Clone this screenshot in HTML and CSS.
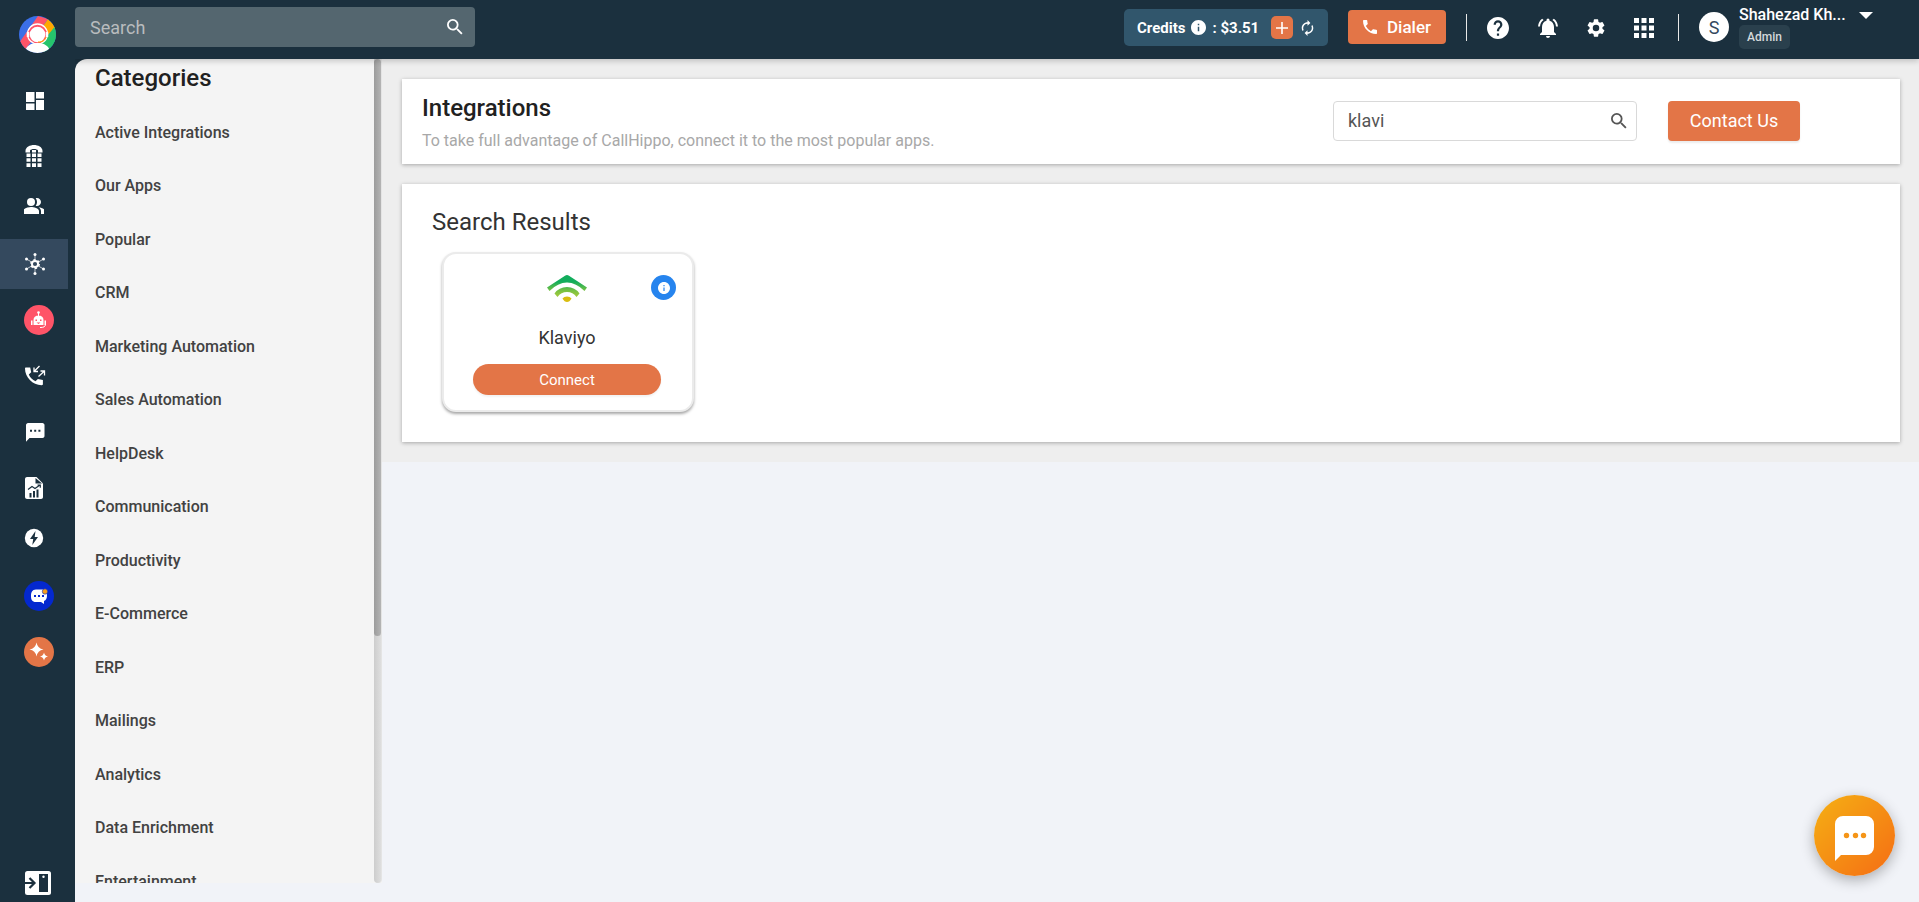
FILE: index.html
```html
<!DOCTYPE html>
<html lang="en">
<head>
<meta charset="utf-8">
<title>Integrations</title>
<link rel="stylesheet" href="styles.css">
</head>
<body>
<div class="app">
  <nav class="rail" aria-label="Main">
    <a class="logo" href="#" aria-label="Home">
      <svg viewBox="0 0 37 37" width="37" height="37">
        <defs><clipPath id="logo-clip"><circle cx="18.5" cy="18.5" r="18.5"/></clipPath></defs>
        <g clip-path="url(#logo-clip)">
          <rect width="37" height="37" fill="#3b6fe8"/>
          <path d="M19 0 29 3 6 34 0 27z" fill="#ff5468"/>
          <path d="M29 3 37 11 23 25 16 22z" fill="#ffa800"/>
          <path d="M37 9v28H25l-3-9z" fill="#26c46c"/>
          <circle cx="18.500" cy="18" r="10" fill="#ff5468" stroke="#fff" stroke-width="1.300"/>
          <path d="M9 16v5M28 16v5" stroke="#fff" stroke-width="2.500"/>
          <path d="M6 37c0-7 6-10 12.500-10S31 30 31 37z" fill="#fff"/>
          <circle cx="18.500" cy="18.500" r="7.800" fill="#fff"/>
          <path d="M27 21c-1 4-4 5-8 5" fill="none" stroke="#ffa800"/>
        </g>
      </svg>
    </a>
    <ul class="rail-list">
      <li><a href="#" aria-label="Dashboard"><svg viewBox="0 0 22 22" width="22" height="22"><path d="M2 2h8.500v10H2zM12 2h8v6.500h-8zM2 13.500h8.500V20H2zM12 10h8v10h-8z"/></svg></a></li>
      <li><a href="#" aria-label="Numbers"><svg viewBox="0 0 22 24" width="22" height="24"><path d="M1.500 7C1.500 3 6 1 10 1s8.500 2 8.500 6v1.500H14V6.500C13 4.500 7 4.500 6 6.500v2H1.500zM2.500 9.500h4v3.500h-4zM8 9.500h4v3.500H8zM13.500 9.500h4v3.500h-4zM2.500 14.300h4v3.500h-4zM8 14.300h4v3.500H8zM13.500 14.300h4v3.500h-4zM2.500 19.200h4v3.800h-4zM8 19.200h4v3.800H8zM13.500 19.200h4v3.800h-4zM8 6h4v2.500H8z"/></svg></a></li>
      <li class="snug"><a href="#" aria-label="Users"><svg viewBox="2 2 20 20" width="20" height="20"><path d="M16.670 13.130C18.040 14.060 19 15.320 19 17v3h4v-3c0-2.180-3.570-3.470-6.330-3.870z"/><circle cx="9" cy="8" r="4"/><path d="M15 12c2.210 0 4-1.790 4-4s-1.790-4-4-4c-.47 0-.91.100-1.330.240C14.500 5.270 15 6.580 15 8s-.5 2.730-1.330 3.760c.42.140.86.240 1.330.240zM9 13c-2.670 0-8 1.340-8 4v3h16v-3c0-2.660-5.330-4-8-4z"/></svg></a></li>
      <li class="current"><a href="#" aria-label="Integrations" aria-current="page"><svg viewBox="0 0 22 22" width="22" height="22"><path d="M11 1v20M2.500 6l17 10M19.500 6l-17 10" stroke="#fff" stroke-width=".7"/><circle cx="11" cy="11" r="4" /><circle cx="11" cy="11" r="4.200" fill="none" stroke="#fff" stroke-width="1.500" stroke-dasharray="2.200 2.200"/><circle cx="11" cy="11" r="2.100" fill="#34495e"/><circle cx="11" cy="1.500" r="1.500"/><circle cx="11" cy="20.500" r="1.500"/><circle cx="2.500" cy="6" r="1.500"/><circle cx="19.500" cy="6" r="1.500"/><circle cx="2.500" cy="16" r="1.500"/><circle cx="19.500" cy="16" r="1.500"/></svg></a></li>
      <li><a href="#" aria-label="Voice bot"><svg viewBox="0 0 30 30" width="30" height="30"><circle cx="15" cy="15" r="15" fill="#ff5468"/><circle cx="14.500" cy="7.500" r="1.300"/><path d="M14 8h1v4h-1zM9.500 15c0-3 2-4.500 5-4.500s5 1.500 5 4.500v5h-10zM7 15.500h1.500V20H7zM20.500 15.500H22V20h-1.500z"/><path d="M21.500 19c0 3-2 3.500-5.500 3.500" fill="none" stroke="#fff"/><path d="M11.500 14.500h1.500V16h-1.500zM16 14.500h1.500V16H16zM12.500 17.500h4l-2 1.500z" fill="#ff5468"/></svg></a></li>
      <li><a href="#" aria-label="Calls"><svg viewBox="0 0 22 22" width="22" height="22"><path d="M2 2.500h4.200l1 4.800L4.800 9.500c1.300 3 3.700 5.400 6.700 6.700l2.400-2.300 5 1V19c0 .8-.5 1.200-1.200 1.200C8.500 20.200 1 12 1 3.500c0-.6.400-1 1-1z"/><path d="M15.500 1 10 6.500M10 2.500v4h4M14.500 11.500 20.500 6M16.500 6h4v4.500" fill="none" stroke="#fff" stroke-width="1.300"/></svg></a></li>
      <li><a href="#" aria-label="Messages"><svg viewBox="0 0 22 22" width="22" height="22"><path d="M4 2h14.500c1 0 2 1 2 2v11c0 1-1 2-2 2H5.500L2 20.800V4c0-1 1-2 2-2z"/><path d="M6 8.700h2v2H6zM10.200 8.700h2v2h-2zM14.400 8.700h2v2h-2z" fill="#1b303e"/></svg></a></li>
      <li><a href="#" aria-label="Reports"><svg viewBox="0 0 22 24" width="22" height="24"><path d="M3 1h9.500L19 7.500V21c0 1-.8 2-2 2H3c-1 0-2-1-2-2V3c0-1.200 1-2 2-2z"/><path d="M11.500 2v5.500H18M5.500 17h2v4.500h-2zM9 15h2v6.500H9zM12.500 13.500h2v8h-2z" fill="#1b303e"/><path d="m4 13.500 4-3 3 2 5-3.500M13.500 9h2.800v2.800" fill="none" stroke="#1b303e" stroke-width="1.200"/></svg></a></li>
      <li class="snug"><a href="#" aria-label="Power dialer"><svg viewBox="0 0 20 20" width="20" height="20"><circle cx="10" cy="10" r="9.200"/><path d="M11.500 3 6 11h3.200L8.300 17 14 9h-3.300z" fill="#1b303e"/></svg></a></li>
      <li><a href="#" aria-label="Chat"><svg viewBox="0 0 30 30" width="30" height="30"><circle cx="15" cy="15" r="15" fill="#0428cf"/><path d="M12 8.500h6c4 0 5 2.500 5 6 0 3-1 4.500-3 5.500v3l-3-2h-5c-4 0-5-2.500-5-6s1-6.500 5-6.500z"/><path d="M10 14h2v2h-2zM14 14h2v2h-2zM18 14h2v2h-2z" fill="#0428cf"/><circle cx="21" cy="10.500" r="2.700" fill="#f9a01b" stroke="#0428cf" stroke-width=".6"/></svg></a></li>
      <li><a href="#" aria-label="AI tools"><svg viewBox="0 0 30 30" width="30" height="30"><circle cx="15" cy="15" r="15" fill="#e37547"/><path d="M12.500 5.500q1 6 7 7-6 1-7 7-1-6-7-7 6-1 7-7zM20 15.500q.7 3.500 4 4-3.300.7-4 4-.7-3.300-4-4 3.300-.5 4-4z"/></svg></a></li>
    </ul>
    <button class="expand" type="button" aria-label="Expand menu"><svg viewBox="0 0 26 24" width="26" height="24"><rect x="0" y="0" width="26" height="24" rx="2.500"/><rect x="14" y="3" width="9" height="18" fill="#1b303e"/><circle cx="18.500" cy="5.700" r="1.200"/><path d="M0 12h9M4.500 7l5 5-5 5" fill="none" stroke="#1b303e" stroke-width="2.200"/></svg></button>
  </nav>

  <header class="topbar">
    <form class="global-search" role="search">
      <input type="search" placeholder="Search" aria-label="Search">
      <button type="button" aria-label="Run search"><svg viewBox="3 3 18 18" width="16" height="16"><path d="M15.500 14h-.79l-.28-.27A6.470 6.470 0 0 0 16 9.500 6.500 6.500 0 1 0 9.500 16c1.610 0 3.090-.59 4.230-1.570l.27.280v.79l5 4.990L20.490 19l-4.990-5zm-6 0C7.010 14 5 11.990 5 9.500S7.010 5 9.500 5 14 7.010 14 9.500 11.990 14 9.500 14z"/></svg></button>
    </form>
    <div class="credits">
      <span>Credits</span>
      <svg viewBox="2 2 20 20" width="15" height="15"><path d="M12 2C6.480 2 2 6.480 2 12s4.480 10 10 10 10-4.480 10-10S17.520 2 12 2zm1 15h-2v-6h2v6zm0-8h-2V7h2v2z"/></svg>
      <span>: $3.51</span>
      <button class="add" type="button" aria-label="Add credits"><svg viewBox="0 0 12 12" width="12" height="12"><path d="M5.200 0h1.600v5.200H12v1.600H6.800V12H5.200V6.800H0V5.200h5.200z"/></svg></button>
      <button class="refresh" type="button" aria-label="Refresh credits"><svg viewBox="3 1 18 22" width="13" height="16"><path d="M12 6v3l4-4-4-4v3c-4.420 0-8 3.580-8 8 0 1.570.46 3.030 1.240 4.260L6.700 14.800A5.870 5.870 0 0 1 6 12c0-3.310 2.690-6 6-6zm6.760 1.740L17.300 9.200c.44.840.7 1.790.7 2.800 0 3.310-2.690 6-6 6v-3l-4 4 4 4v-3c4.420 0 8-3.580 8-8 0-1.570-.46-3.030-1.240-4.260z"/></svg></button>
    </div>
    <button class="dialer" type="button"><svg viewBox="3 3 18 18" width="14" height="14"><path d="M6.620 10.790a15.150 15.150 0 0 0 6.590 6.590l2.200-2.200c.27-.27.670-.36 1.020-.24 1.120.37 2.330.57 3.570.57.550 0 1 .45 1 1V20c0 .55-.45 1-1 1C10.610 21 3 13.390 3 4c0-.55.450-1 1-1h3.500c.55 0 1 .45 1 1 0 1.250.2 2.450.57 3.570.110.350.030.740-.25 1.020z"/></svg>Dialer</button>
    <div class="tools">
      <button type="button" aria-label="Help"><svg viewBox="2 2 20 20" width="22" height="22"><path d="M12 2C6.480 2 2 6.480 2 12s4.480 10 10 10 10-4.480 10-10S17.520 2 12 2zm1 17h-2v-2h2v2zm2.070-7.750-.9.920C13.450 12.900 13 13.500 13 15h-2v-.5c0-1.100.45-2.100 1.170-2.830l1.240-1.260c.37-.36.590-.86.590-1.410a2 2 0 1 0-4 0H8a4 4 0 1 1 8 0c0 .88-.36 1.680-.93 2.250z"/></svg></button>
      <button type="button" aria-label="Notifications"><svg viewBox="2 2 20 20" width="20" height="20"><path d="M7.580 4.080 6.150 2.650A10.420 10.420 0 0 0 2.030 10.500h2a8.450 8.450 0 0 1 3.550-6.420zm12.390 6.420h2a10.490 10.490 0 0 0-4.120-7.850l-1.420 1.430a8.500 8.500 0 0 1 3.540 6.420zM18 11c0-3.070-1.640-5.640-4.500-6.320V4a1.500 1.500 0 0 0-3 0v.68C7.630 5.360 6 7.920 6 11v5l-2 2v1h16v-1l-2-2v-5zm-6 11c1.100 0 2-.9 2-2h-4a2 2 0 0 0 2 2z"/></svg></button>
      <button type="button" aria-label="Settings"><svg viewBox="2 2 20 20" width="18" height="18"><path d="M19.140 12.940c.04-.3.060-.61.060-.94s-.02-.64-.07-.94l2.030-1.580a.49.490 0 0 0 .12-.61l-1.920-3.320a.49.490 0 0 0-.59-.22l-2.390.96a7 7 0 0 0-1.620-.94l-.36-2.540A.480.480 0 0 0 13.920 2.400h-3.840a.47.470 0 0 0-.47.410l-.36 2.540c-.59.240-1.130.57-1.620.94l-2.390-.96a.47.470 0 0 0-.59.220L2.740 8.870a.47.470 0 0 0 .12.610l2.030 1.580c-.05.300-.09.630-.09.940s.02.640.07.940l-2.030 1.580a.49.490 0 0 0-.12.610l1.920 3.320c.12.220.37.290.59.220l2.390-.96c.5.380 1.030.7 1.620.94l.36 2.540c.05.240.24.410.48.410h3.840c.24 0 .44-.17.47-.41l.36-2.540a7 7 0 0 0 1.620-.94l2.390.96c.22.080.47 0 .59-.22l1.920-3.320a.47.470 0 0 0-.12-.61zM12 15.600a3.600 3.600 0 1 1 0-7.200 3.600 3.600 0 0 1 0 7.200z"/></svg></button>
      <button type="button" aria-label="Apps"><svg viewBox="0 0 20 20" width="20" height="20"><path d="M0 0h5v5H0zM7.500 0h5v5h-5zM15 0h5v5h-5zM0 7.500h5v5H0zM7.500 7.500h5v5h-5zM15 7.500h5v5h-5zM0 15h5v5H0zM7.500 15h5v5h-5zM15 15h5v5h-5z"/></svg></button>
    </div>
    <button class="account" type="button">
      <span class="avatar">S</span>
      <span class="who"><span class="name">Shahezad Kh...</span><span class="role">Admin</span></span>
      <svg viewBox="0 0 14 7" width="14" height="7"><path d="M0 0h14L7 7z"/></svg>
    </button>
  </header>

  <aside class="categories">
    <div class="cat-body">
      <h2>Categories</h2>
      <ul>
        <li><a href="#">Active Integrations</a></li>
        <li><a href="#">Our Apps</a></li>
        <li><a href="#">Popular</a></li>
        <li><a href="#">CRM</a></li>
        <li><a href="#">Marketing Automation</a></li>
        <li><a href="#">Sales Automation</a></li>
        <li><a href="#">HelpDesk</a></li>
        <li><a href="#">Communication</a></li>
        <li><a href="#">Productivity</a></li>
        <li><a href="#">E-Commerce</a></li>
        <li><a href="#">ERP</a></li>
        <li><a href="#">Mailings</a></li>
        <li><a href="#">Analytics</a></li>
        <li><a href="#">Data Enrichment</a></li>
        <li><a href="#">Entertainment</a></li>
      </ul>
    </div>
    <div class="track"><div class="thumb"></div></div>
  </aside>

  <main class="main">
    <div class="content">
      <section class="panel intro">
        <div class="intro-text">
          <h1>Integrations</h1>
          <p>To take full advantage of CallHippo, connect it to the most popular apps.</p>
        </div>
        <form class="app-search">
          <input type="text" value="klavi" aria-label="Search integrations">
          <button type="button" aria-label="Find integration"><svg viewBox="3 3 18 18" width="16" height="16"><path d="M15.500 14h-.79l-.28-.27A6.470 6.470 0 0 0 16 9.500 6.500 6.500 0 1 0 9.500 16c1.610 0 3.090-.59 4.230-1.570l.27.280v.79l5 4.990L20.490 19l-4.990-5zm-6 0C7.010 14 5 11.990 5 9.500S7.010 5 9.500 5 14 7.010 14 9.500 11.990 14 9.500 14z"/></svg></button>
        </form>
        <button class="contact" type="button">Contact Us</button>
      </section>
      <section class="panel results">
        <h2>Search Results</h2>
        <article class="app-card">
          <svg class="app-logo" viewBox="0 0 40 27" width="40" height="27">
            <defs><linearGradient id="leaf" x1="0" y1="0" x2="0" y2="27" gradientUnits="userSpaceOnUse"><stop offset="0" stop-color="#12ad5c"/><stop offset=".25" stop-color="#12ad5c"/><stop offset=".6" stop-color="#7dc242"/><stop offset=".8" stop-color="#a5c93c"/><stop offset="1" stop-color="#dfbb00"/></linearGradient></defs>
            <g fill="url(#leaf)"><path d="M20 0q1 0 2 .7L40 12.500 37.500 16Q29 7.500 20 7.500T2.500 16L0 12.500 18 .7Q19 0 20 0z"/><path d="M20 12q8 0 12.500 6.500L29.500 22Q26 17 20 17t-9.500 5l-3-3.500Q12 12 20 12z"/><path d="M20 21.500q3 0 4.500 2-2 3.500-4.500 3.500t-4.500-3.500q1.500-2 4.500-2z" fill="#d9bd10"/></g>
          </svg>
          <h3>Klaviyo</h3>
          <button class="connect" type="button">Connect</button>
          <button class="info" type="button" aria-label="About Klaviyo"><svg viewBox="2 2 20 20" width="12" height="12"><path d="M12 2C6.480 2 2 6.480 2 12s4.480 10 10 10 10-4.480 10-10S17.520 2 12 2zm1 15h-2v-6h2v6zm0-8h-2V7h2v2z"/></svg></button>
        </article>
      </section>
    </div>
  </main>
</div>
<button class="chat" type="button" aria-label="Open chat"><svg viewBox="0 0 40 46" width="40" height="46"><path d="M8 0h23a8 8 0 0 1 8 8v23a8 8 0 0 1-8 8H6l-6 6V8a8 8 0 0 1 8-8z"/><g fill="#f59518"><circle cx="11.500" cy="19.500" r="2.700"/><circle cx="20.500" cy="19.500" r="2.700"/><circle cx="28.500" cy="19.500" r="2.700"/></g></svg></button>
</body>
</html>
```

FILE: styles.css
```css
* { box-sizing: border-box; }
body { margin: 0; background: #f1f3f8; color: #212121; font-family: Roboto, "Liberation Sans", sans-serif; font-size: 16px; }
h1, h2, h3, p, ul { margin: 0; padding: 0; }
ul { list-style: none; }
a { color: inherit; text-decoration: none; }
button { border: 0; padding: 0; background: none; color: inherit; font: inherit; cursor: pointer; display: flex; align-items: center; justify-content: center; }
input { font: inherit; border: 0; background: none; outline: 0; min-width: 0; }
svg { display: block; flex: none; }

.app { display: grid; grid-template: 59px 1fr / 75px 307px 1fr; height: 100vh; background: linear-gradient(#1b303e, #1b303e) 0 0 / 100% 80px no-repeat; }

.rail { grid-row: 1 / 3; background: #1b303e; fill: #fff; display: flex; flex-direction: column; }
.logo { padding: 16px 19px 0; }
.rail-list { flex: 1; padding-top: 23px; }
.rail-list li { width: 68px; height: 50px; margin-bottom: 6px; display: flex; align-items: center; }
.rail-list a { padding-left: 24px; }
.rail-list li:has(+ .snug) { margin-bottom: 0; }
.rail-list li:first-child { margin-bottom: 5px; }
.rail-list .snug { margin-bottom: 8px; }
.rail-list .current { background: #34495e; }
.expand { width: 26px; margin: 0 0 7px 25px; }

.topbar { grid-column: 2 / 4; background: #1b303e; color: #fff; fill: #fff; display: flex; align-items: flex-start; padding: 7px 46px 0 0; box-shadow: 0 2px 6px rgba(0, 0, 0, .2); clip-path: inset(0 0 -8px 0); z-index: 1; }
.global-search { width: 400px; height: 40px; display: flex; align-items: center; padding: 0 12px 0 15px; border-radius: 4px; background: #54666f; margin-right: auto; }
.global-search input { flex: 1; font-size: 18px; color: #fff; padding: 0; }
.global-search input::placeholder { color: #b9bcbe; }
.credits { width: 204px; height: 37px; margin: 2px 20px 0 0; padding-left: 13px; display: flex; align-items: center; gap: 6px; border-radius: 5px; background: #31566c; font-size: 15px; font-weight: 700; }
.add { width: 22px; height: 23px; margin-left: 6px; border-radius: 5px; background: #e37547; }
.refresh { margin-left: 2px; }
.dialer { width: 98px; height: 34px; margin: 3px 20px 0 0; gap: 10px; border-radius: 4px; background: #e37547; font-size: 17px; font-weight: 500; }
.tools { width: 213px; height: 27px; margin-top: 7px; padding: 0 24px 0 20px; display: flex; align-items: center; justify-content: space-between; border: solid #e8e8e8; border-width: 0 1px; }
.account { margin: -2px 0 0 20px; align-items: flex-start; text-align: left; fill: #fff; }
.avatar { width: 30px; height: 30px; margin-top: 7px; border-radius: 50%; background: #fff; color: #34495e; font-size: 18px; display: grid; place-items: center; }
.who { width: 120px; margin-left: 10px; display: grid; justify-items: start; line-height: 20px; }
.name { font-weight: 500; }
.role { height: 24px; padding: 2px 8px; border-radius: 5px; background: #2a404d; color: #d5d9db; font-size: 12px; font-weight: 500; }
.account > svg { margin: 7px 0 0; }

.categories { display: flex; align-self: start; height: calc(100vh - 78px); border-radius: 12px 0 0 0; background: #f4f4f4; overflow: hidden; }
.cat-body { flex: 1; padding: 3px 20px 0; overflow: hidden; }
.categories h2 { font-size: 24px; font-weight: 500; line-height: 32px; margin-bottom: 11px; }
.categories li { height: 54px; display: flex; align-items: center; color: #424242; font-weight: 500; }
.categories li:nth-child(even) { height: 53px; }
.track { width: 8px; border-right: 1px solid #e4e4e4; border-radius: 0 0 4px 4px; background: linear-gradient(90deg, #cdcdcd, #dedede); }
.thumb { width: 7px; height: 70%; border-radius: 4px; background: linear-gradient(90deg, #9c9c9c, #b4b4b4); }

.main { background: #f1f3f8; min-width: 0; }
.content { background: #eee; padding: 20px 19px 20px 20px; display: grid; gap: 20px; }
.panel { background: #fff; box-shadow: 0 1px 4px rgba(0, 0, 0, .3); }
.intro { display: flex; align-items: center; padding: 11px 100px 13px 20px; }
.intro-text { flex: 1; }
h1 { font-size: 24px; font-weight: 500; line-height: 36px; }
.intro p { color: #a8a8a8; line-height: 20px; margin-top: 5px; }
.app-search { width: 304px; height: 40px; margin-right: 31px; padding: 0 9px 0 14px; display: flex; align-items: center; border: 1px solid #d9d9d9; border-radius: 4px; fill: #555; }
.app-search input { flex: 1; padding: 0; color: #555; font-size: 18px; }
.contact { width: 132px; height: 40px; border-radius: 4px; background: #e37547; color: #fff; font-size: 18px; box-shadow: 0 2px 2px rgba(0, 0, 0, .08); }
.results { padding: 22px 30px 30px; }
.results h2 { color: #333; font-size: 24px; font-weight: 400; line-height: 32px; margin-bottom: 14px; }
.app-card { position: relative; width: 252px; height: 160px; margin-left: 10px; padding: 21px 2px 0 0; display: flex; flex-direction: column; align-items: center; border: 2px solid #ebebeb; border-radius: 14px; background: #fff; box-shadow: 0 2px 3px rgba(0, 0, 0, .35); }
.app-card h3 { margin: 24px 0 14px; color: #333; font-size: 18px; font-weight: 400; line-height: 24px; }
.connect { width: 188px; height: 31px; border-radius: 16px; background: #e37547; color: #fff; font-size: 15px; box-shadow: 0 2px 2px rgba(0, 0, 0, .05); }
.info { position: absolute; top: 21px; right: 16px; width: 25px; height: 25px; border-radius: 50%; background: #2684ee; fill: #fff; }

.chat { position: fixed; right: 24px; bottom: 26px; width: 81px; height: 81px; padding-top: 6px; border-radius: 50%; background: linear-gradient(135deg, #f5b014, #f56d14); fill: #fff; box-shadow: 0 4px 14px rgba(0, 0, 0, .3); }
```
